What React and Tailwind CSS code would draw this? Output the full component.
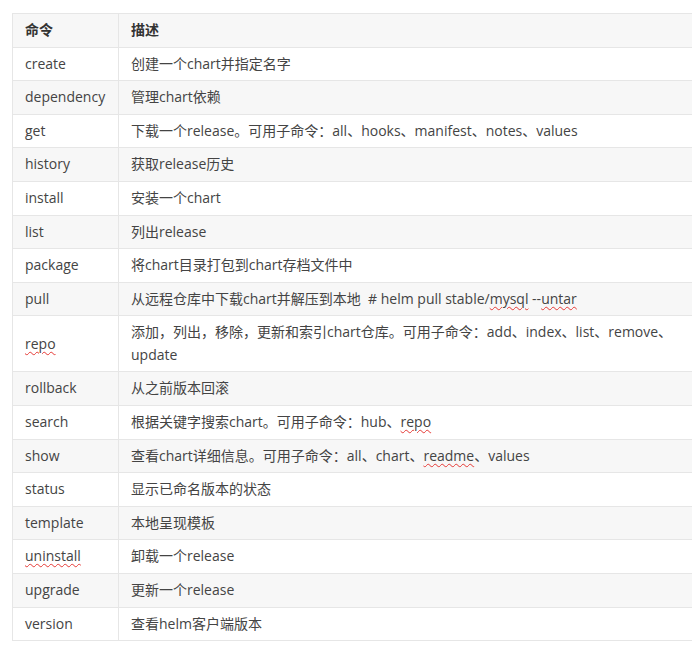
import React from "react";

const W = ({ children }) => (
  <span className="underline decoration-wavy decoration-[#e53935] decoration-1 underline-offset-2">{children}</span>
);

const rows = [
  ["create", "创建一个chart并指定名字"],
  ["dependency", "管理chart依赖"],
  ["get", "下载一个release。可用子命令：all、hooks、manifest、notes、values"],
  ["history", "获取release历史"],
  ["install", "安装一个chart"],
  ["list", "列出release"],
  ["package", "将chart目录打包到chart存档文件中"],
  ["pull", <>从远程仓库中下载chart并解压到本地&nbsp; # helm pull stable/<W>mysql</W> --<W>untar</W></>],
  [<W>repo</W>, "添加，列出，移除，更新和索引chart仓库。可用子命令：add、index、list、remove、update"],
  ["rollback", "从之前版本回滚"],
  ["search", <>根据关键字搜索chart。可用子命令：hub、<W>repo</W></>],
  ["show", <>查看chart详细信息。可用子命令：all、chart、<W>readme</W>、values</>],
  ["status", "显示已命名版本的状态"],
  ["template", "本地呈现模板"],
  [<W>uninstall</W>, "卸载一个release"],
  ["upgrade", "更新一个release"],
  ["version", "查看helm客户端版本"],
];

export default function App() {
  return (
    <div
      className="w-[692px] h-[647px] overflow-hidden bg-white text-[#444] text-[14px] leading-[22.4px]"
      style={{ fontFamily: '"Open Sans", "Noto Sans CJK SC", sans-serif' }}
    >
      <div className="pt-[13px] pl-[12px]">
        <table className="border-collapse w-[700px]">
          <thead>
            <tr className="bg-[#f7f7f7]">
              <th className="border border-[#e6e6e6] w-[106px] px-[12px] py-[5.1px] text-left font-bold text-[#333]">命令</th>
              <th className="border border-[#e6e6e6] px-[12px] py-[5.1px] text-left font-bold text-[#333]">描述</th>
            </tr>
          </thead>
          <tbody>
            {rows.map((r, i) => (
              <tr key={i} className={i % 2 === 1 ? "bg-[#f7f7f7]" : "bg-white"}>
                <td className="border border-[#e6e6e6] px-[12px] py-[5.1px] align-middle">{r[0]}</td>
                <td className="border border-[#e6e6e6] px-[12px] py-[5.1px] align-middle">{r[1]}</td>
              </tr>
            ))}
          </tbody>
        </table>
      </div>
    </div>
  );
}
